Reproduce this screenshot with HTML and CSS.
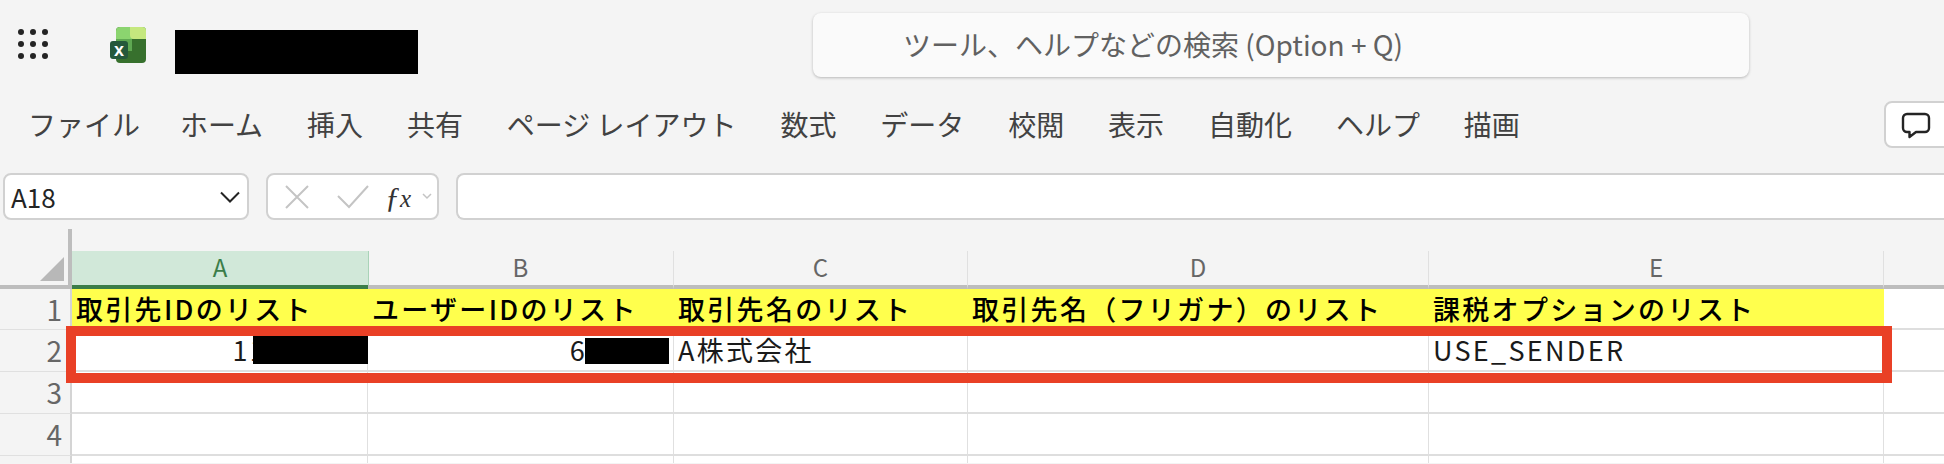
FILE: index.html
```html
<!DOCTYPE html>
<html lang="ja">
<head>
  <meta charset="UTF-8">
  <title>Excel</title>
  <link rel="stylesheet" href="styles.css">
</head>
<body>

<div class="titlebar">
  <svg class="waffle" width="30" height="30" viewBox="0 0 30 30">
    <circle cx="3" cy="3" r="3"/><circle cx="15" cy="3" r="3"/><circle cx="27" cy="3" r="3"/>
    <circle cx="3" cy="15" r="3"/><circle cx="15" cy="15" r="3"/><circle cx="27" cy="15" r="3"/>
    <circle cx="3" cy="27" r="3"/><circle cx="15" cy="27" r="3"/><circle cx="27" cy="27" r="3"/>
  </svg>
  <svg class="logo" width="36" height="36" viewBox="0 0 36 36">
    <rect x="6" width="30" height="36" rx="4" fill="#37702d"/>
    <path d="M10 0h22a4 4 0 0 1 4 4v8H22v12H6V4a4 4 0 0 1 4-4z" fill="#8bd46f"/>
    <path d="M6 12h16v12H6z" fill="#5fa852"/>
    <path d="M20 0h12a4 4 0 0 1 4 4v8H24a4 4 0 0 1-4-4z" fill="#c5e87e"/>
    <rect y="14" width="18" height="18" rx="3" fill="#25583b"/>
    <text x="9" y="28.500" class="logoX">x</text>
  </svg>
  <div class="redact titleRedact"></div>
  <div class="search">ツール、ヘルプなどの検索 (Option + Q)</div>
</div>

<div class="menubar">
  <span class="first">ファイル</span>
  <span>ホーム</span>
  <span>挿入</span>
  <span>共有</span>
  <span>ページ レイアウト</span>
  <span>数式</span>
  <span>データ</span>
  <span>校閲</span>
  <span>表示</span>
  <span>自動化</span>
  <span>ヘルプ</span>
  <span>描画</span>
  <div class="commentBtn">
    <svg width="30" height="27" viewBox="0 0 30 27" fill="none" stroke="#242424" stroke-width="2.400" stroke-linejoin="round">
      <path d="M6 2h18a4 4 0 0 1 4 4v10a4 4 0 0 1-4 4H15l-6.500 5v-5H6a4 4 0 0 1-4-4V6a4 4 0 0 1 4-4z"/>
    </svg>
  </div>
</div>

<div class="formulabar">
  <div class="box namebox">
    <span>A18</span>
    <svg width="20" height="12" viewBox="0 0 20 12" fill="none" stroke="#242424" stroke-width="2"><path d="M1 1.500l9 9 9-9"/></svg>
  </div>
  <div class="box fxbox">
    <svg width="26" height="26" viewBox="0 0 26 26" fill="none" stroke="#c4c4c4" stroke-width="2"><path d="M2 2l22 22M24 2L2 24"/></svg>
    <svg width="32" height="24" viewBox="0 0 32 24" fill="none" stroke="#c4c4c4" stroke-width="2"><path d="M1 11l11 11L31 1"/></svg>
    <span class="fx">ƒ<i>x</i></span>
    <svg width="10" height="7" viewBox="0 0 10 7" fill="none" stroke="#c4c4c4" stroke-width="1.500"><path d="M1 1l4 4 4-4"/></svg>
  </div>
  <div class="box forminput"></div>
</div>

<div class="sheetWrap">
  <div class="sheet">
    <div class="corner"><div class="cornerTri"></div></div>
    <div class="colHead active">A</div>
    <div class="colHead">B</div>
    <div class="colHead">C</div>
    <div class="colHead">D</div>
    <div class="colHead">E</div>
    <div class="colHead last"></div>

    <div class="rowHead">1</div>
    <div class="cell head">取引先IDのリスト</div>
    <div class="cell head">ユーザーIDのリスト</div>
    <div class="cell head">取引先名のリスト</div>
    <div class="cell head">取引先名（フリガナ）のリスト</div>
    <div class="cell head">課税オプションのリスト</div>
    <div class="cell last"></div>

    <div class="rowHead">2</div>
    <div class="cell num">11<span class="redact idA"></span></div>
    <div class="cell num">6<span class="redact idB"></span></div>
    <div class="cell">A株式会社</div>
    <div class="cell"></div>
    <div class="cell">USE_SENDER</div>
    <div class="cell last"></div>

    <div class="rowHead">3</div>
    <div class="cell"></div><div class="cell"></div><div class="cell"></div><div class="cell"></div><div class="cell"></div><div class="cell last"></div>

    <div class="rowHead">4</div>
    <div class="cell"></div><div class="cell"></div><div class="cell"></div><div class="cell"></div><div class="cell"></div><div class="cell last"></div>

    <div class="rowHead tail"></div>
    <div class="cell tail"></div><div class="cell tail"></div><div class="cell tail"></div><div class="cell tail"></div><div class="cell tail"></div><div class="cell last tail"></div>
  </div>
  <div class="highlight"></div>
</div>

</body>
</html>
```

FILE: styles.css
```css
* {
  padding: 0;
  margin: 0;
  box-sizing: border-box;
}

html, body {
  height: 464px;
  overflow: hidden;
}

body {
  background-color: #f4f4f4;
  font-family: "Noto Sans CJK JP", "Noto Sans", sans-serif;
  color: #424242;
}

.redact {
  background-color: #000;
}

.titlebar {
  display: flex;
  align-items: flex-start;
  height: 92px;
  padding-left: 18px;
}

.waffle {
  margin-top: 29px;
  fill: #242424;
}

.logo {
  margin: 27px 0 0 62px;
}

.logoX {
  font-family: "Liberation Sans", sans-serif;
  font-size: 18px;
  font-weight: bold;
  fill: #fff;
  text-anchor: middle;
}

.titleRedact {
  width: 243px;
  height: 44px;
  margin: 30px 0 0 29px;
}

.search {
  width: 936px;
  height: 64px;
  margin: 13px 0 0 395px;
  padding-left: 90px;
  background-color: #fafafa;
  border-radius: 8px;
  box-shadow: 0 1px 3px rgba(0,0,0,0.25);
  font-size: 28px;
  line-height: 62px;
  color: #616161;
}

.menubar {
  display: flex;
  align-items: center;
  gap: 43.900px;
  height: 81px;
  padding: 0 0 18px 28px;
  font-size: 28px;
  line-height: 1;
}

.menubar .first {
  margin-right: -4px;
}

.commentBtn {
  position: absolute;
  left: 1884px;
  top: 101px;
  width: 90px;
  height: 47px;
  padding: 9px 0 0 15px;
  background-color: #fff;
  border: 2px solid #d1d1d1;
  border-radius: 8px;
}

.formulabar {
  display: flex;
  gap: 17px;
  height: 47px;
  padding-left: 3px;
}

.box {
  display: flex;
  align-items: center;
  background-color: #fff;
  border: 2px solid #d1d1d1;
  border-radius: 8px;
}

.namebox {
  justify-content: space-between;
  width: 246px;
  padding: 0 7px 0 6px;
  font-size: 26px;
  color: #242424;
}

.fxbox {
  width: 173px;
  padding-left: 16px;
}

.fxbox svg:nth-child(2) {
  margin-left: 27px;
}

.fx {
  margin-left: 16px;
  font-family: "Liberation Serif", serif;
  font-style: italic;
  font-size: 30px;
  color: #333;
  line-height: 1;
}

.fx i {
  font-size: 25px;
}

.fxbox svg:last-child {
  margin-left: 11px;
}

.forminput {
  flex: 1;
  border-right: 0;
  border-radius: 8px 0 0 8px;
}

.sheetWrap {
  position: relative;
  margin-top: 9px;
}

.sheet {
  display: grid;
  grid-template-columns: 72px 296px 306px 294px 461px 455px 1fr;
  grid-template-rows: 60px 41px 42px 42px 42px 7px;
}

.corner {
  display: flex;
  align-items: flex-end;
  justify-content: flex-end;
  padding: 0 4px 4px 0;
  border-right: 4px solid #bdbdbd;
  border-bottom: 4px solid #bdbdbd;
}

.cornerTri {
  width: 24px;
  height: 24px;
  background-color: #b8b8b8;
  clip-path: polygon(100% 0, 100% 100%, 0 100%);
}

.colHead {
  align-self: end;
  height: 38px;
  border-right: 1px solid #e0e0e0;
  border-bottom: 4px solid #bdbdbd;
  text-align: center;
  font-size: 24px;
  line-height: 32px;
  color: #666;
}

.colHead.active {
  margin-right: -1px;
  background-color: #d1e8d9;
  border-right-color: #a9d3b8;
  border-bottom-color: #3b7d49;
  color: #3b7d49;
}

.colHead.last {
  border-right: 0;
}

.rowHead {
  padding-right: 8px;
  background-color: #f4f4f4;
  border-right: 2px solid #d4d4d4;
  border-bottom: 1px solid #e0e0e0;
  text-align: right;
  font-size: 28px;
  line-height: 40px;
  color: #666;
}

.cell {
  padding: 0 4px;
  background-color: #fff;
  border-right: 1px solid #e0e0e0;
  border-bottom: 2px solid #dedede;
  font-size: 27px;
  letter-spacing: 2.300px;
  line-height: 40px;
  color: #1a1a1a;
  white-space: nowrap;
}

.cell.head {
  background-color: #ffff4d;
  border-right-color: #ffff4d;
  border-bottom: 0;
  font-weight: 500;
  color: #000;
}

.cell.last {
  border-right: 0;
}

.cell.num {
  display: flex;
  justify-content: flex-end;
  padding-right: 0;
}

.tail {
  border-bottom: 0;
}

.idA {
  flex: none;
  width: 115px;
  height: 29px;
  margin: 5px -1px 0 -14px;
}

.idB {
  flex: none;
  width: 84px;
  height: 26px;
  margin: 8px 4px 0 -2px;
}

/* annotation frame over row 2 */
.highlight {
  position: absolute;
  left: 66px;
  top: 97px;
  width: 1826px;
  height: 57px;
  border: 10px solid #e94026;
}
```
